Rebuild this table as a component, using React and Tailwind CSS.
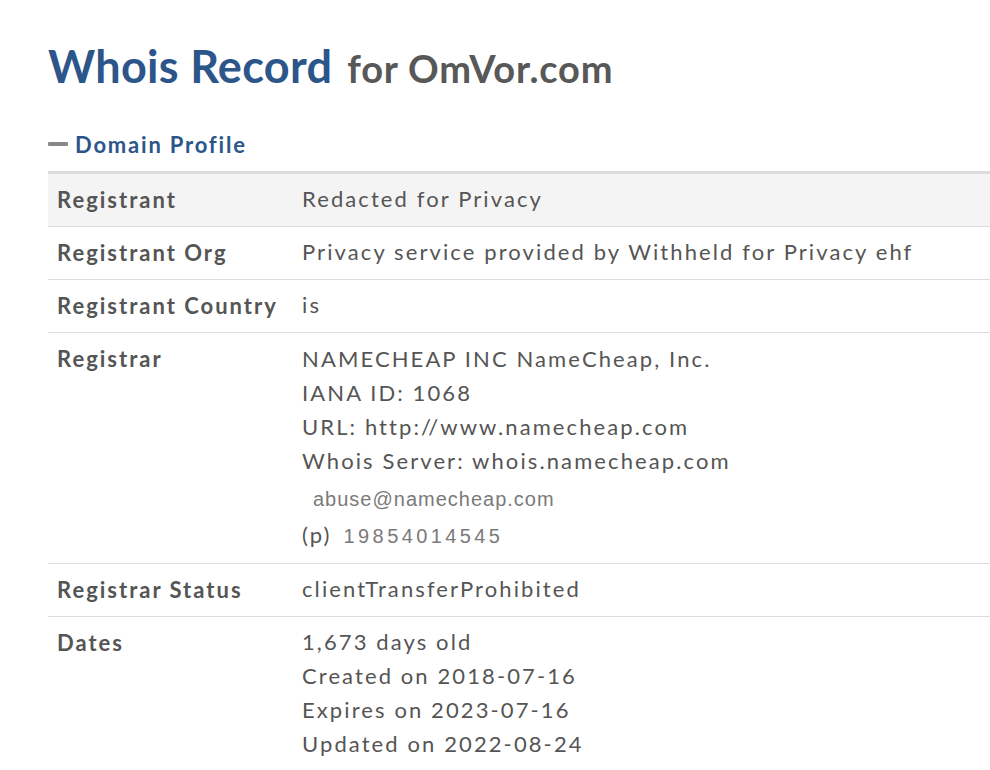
import React from 'react';

const rows = [
  { label: 'Registrant', lines: ['Redacted for Privacy'], shaded: true },
  { label: 'Registrant Org', lines: ['Privacy service provided by Withheld for Privacy ehf'] },
  { label: 'Registrant Country', lines: ['is'] },
  {
    label: 'Registrar',
    lines: [
      'NAMECHEAP INC NameCheap, Inc.',
      'IANA ID: 1068',
      'URL: http://www.namecheap.com',
      'Whois Server: whois.namecheap.com',
    ],
    contact: true,
  },
  { label: 'Registrar Status', lines: ['clientTransferProhibited'] },
  {
    label: 'Dates',
    lines: ['1,673 days old', 'Created on 2018-07-16', 'Expires on 2023-07-16', 'Updated on 2022-08-24'],
  },
];

const App = () => {
  return (
    <div className="bg-white min-h-screen pl-[48px] pt-[39px] overflow-hidden" style={{ fontFamily: 'Lato, "Open Sans", sans-serif' }}>
      {/* Title */}
      <h1 className="flex items-baseline gap-[15px] whitespace-nowrap leading-[1.2]">
        <span className="text-[45px] font-bold text-[#2c5689] tracking-[0.3px]">Whois Record</span>
        <span className="text-[38px] font-bold text-[#585858] tracking-[0.8px]">for OmVor.com</span>
      </h1>

      {/* Section toggle */}
      <div className="flex items-center gap-[7px] mt-[35px] mb-[10px]">
        <span className="w-[20px] h-[4px] bg-[#888] rounded-[1px] -mt-[2px]"></span>
        <span className="text-[22px] font-bold text-[#2c5689] tracking-[1.8px]">Domain Profile</span>
      </div>

      {/* Table */}
      <div className="border-t-[3px] border-[#dddddd] text-[#555] text-[22px] tracking-[2.1px]">
        {rows.map((row) => (
          <div
            key={row.label}
            className={`flex border-b border-[#dddddd] ${row.shaded ? 'bg-[#f4f4f4]' : ''}`}
          >
            <div className="w-[254px] shrink-0 pl-[9px] py-[9px] leading-[34px] font-bold tracking-[2px] whitespace-nowrap">
              {row.label}
            </div>
            <div className={`leading-[34px] whitespace-nowrap ${row.contact ? 'pt-[9px] pb-[10px]' : 'pt-[8px] pb-[10px]'}`}>
              {row.lines.map((l) => (
                <div key={l}>{l}</div>
              ))}
              {row.contact && (
                <>
                  <div className="pl-[11px] pt-[4px] text-[20px] text-[#7a7a7a] tracking-[1px]" style={{ fontFamily: '"Liberation Sans", Arial, sans-serif' }}>
                    abuse@namecheap.com
                  </div>
                  <div className="flex items-baseline pt-[2px]">
                    <span>(p)</span>
                    <span className="ml-[12px] text-[20px] text-[#7a7a7a] tracking-[3.4px]" style={{ fontFamily: '"Liberation Sans", Arial, sans-serif' }}>
                      19854014545
                    </span>
                  </div>
                </>
              )}
            </div>
          </div>
        ))}
      </div>
    </div>
  );
};

export default App;
